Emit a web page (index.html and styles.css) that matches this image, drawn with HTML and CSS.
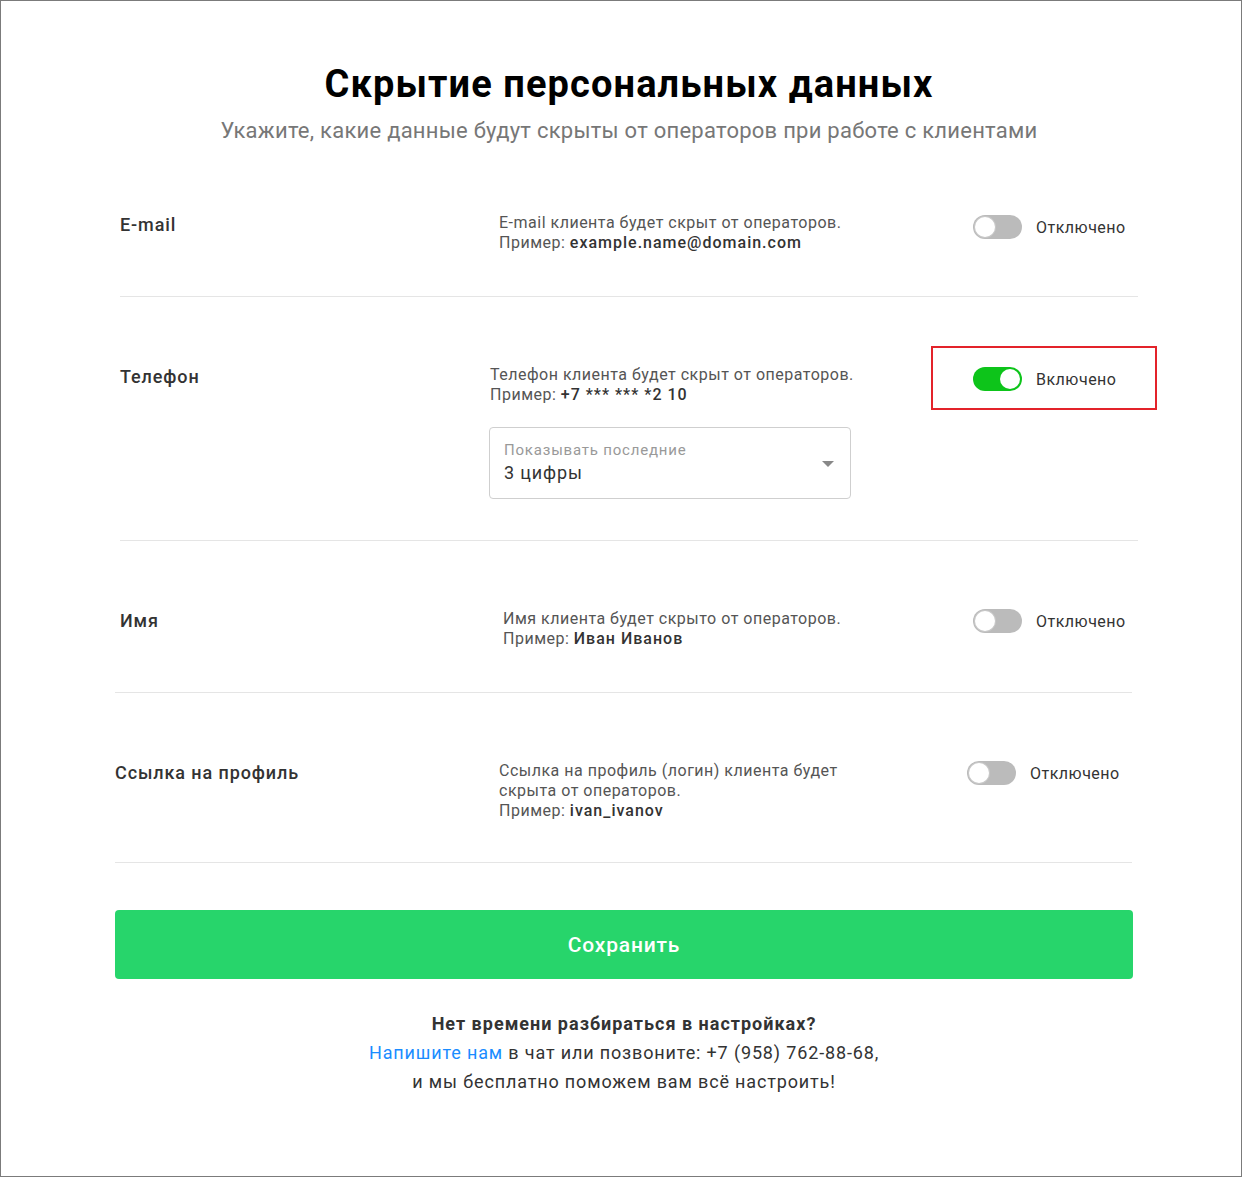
FILE: index.html
```html
<!DOCTYPE html>
<html lang="ru">
<head>
<meta charset="utf-8">
<title>Скрытие персональных данных</title>
<link rel="stylesheet" href="styles.css">
</head>
<body>
<div class="frame">
  <header class="head">
    <h1 class="title">Скрытие персональных данных</h1>
    <p class="subtitle">Укажите, какие данные будут скрыты от операторов при работе с клиентами</p>
  </header>

  <section class="rows">
    <div class="row row--a row--email">
      <div class="label">E-mail</div>
      <div class="desc">
        <p>E-mail клиента будет скрыт от операторов.<br>Пример: <b>example.name@domain.com</b></p>
      </div>
      <div class="switch">
        <span class="toggle"><span class="knob"></span></span>
        <span class="state">Отключено</span>
      </div>
    </div>

    <div class="row row--a row--phone">
      <div class="label">Телефон</div>
      <div class="desc">
        <p>Телефон клиента будет скрыт от операторов.<br>Пример: <b>+7 *** *** *2 10</b></p>
        <div class="select">
          <span class="select-label">Показывать последние</span>
          <span class="select-value">3 цифры</span>
          <span class="select-arrow"></span>
        </div>
      </div>
      <div class="switch">
        <span class="toggle toggle--on"><span class="knob"></span></span>
        <span class="state">Включено</span>
        <span class="mark"></span>
      </div>
    </div>

    <div class="row row--b row--name">
      <div class="label">Имя</div>
      <div class="desc">
        <p>Имя клиента будет скрыто от операторов.<br>Пример: <b>Иван Иванов</b></p>
      </div>
      <div class="switch">
        <span class="toggle"><span class="knob"></span></span>
        <span class="state">Отключено</span>
      </div>
    </div>

    <div class="row row--b row--link">
      <div class="label">Ссылка на профиль</div>
      <div class="desc">
        <p>Ссылка на профиль (логин) клиента будет<br>скрыта от операторов.<br>Пример: <b>ivan_ivanov</b></p>
      </div>
      <div class="switch">
        <span class="toggle"><span class="knob"></span></span>
        <span class="state">Отключено</span>
      </div>
    </div>
  </section>

  <div class="actions">
    <button class="save" type="button">Сохранить</button>
  </div>

  <footer class="help">
    <p class="help-title">Нет времени разбираться в настройках?</p>
    <p><a class="help-link" href="#">Напишите нам</a> в чат или позвоните: +7 (958) 762-88-68,</p>
    <p>и мы бесплатно поможем вам всё настроить!</p>
  </footer>
</div>
</body>
</html>
```

FILE: styles.css
```css
* { box-sizing: border-box; }
html, body { margin: 0; padding: 0; background: #fff; }
body {
  font-family: Roboto, "Noto Sans", "Liberation Sans", sans-serif;
  color: #333;
}
.frame {
  width: 1242px;
  height: 1177px;
  border: 1px solid #7b7b7b;
  padding-top: 60px;
  overflow: hidden;
}
.head { text-align: center; padding-left: 16px; }
.title {
  margin: 0;
  font-size: 38px;
  line-height: 46px;
  font-weight: 700;
  color: #000;
  letter-spacing: 1.1px;
}
.subtitle {
  margin: 9px 0 0;
  font-size: 22px;
  line-height: 30px;
  color: #777;
  letter-spacing: 0.25px;
}
.rows { display: flex; flex-direction: column; margin-top: -1px; }
.row {
  display: grid;
  grid-template-columns: 379px 474px auto;
  align-items: start;
  padding: 68px 0 43px;
  border-bottom: 1px solid #e5e5e5;
}
.row--a { margin-left: 119px; width: 1018px; }
.row--b { margin-left: 114px; width: 1017px; }
.row--phone { padding-bottom: 41px; }
.row--link { padding-bottom: 41px; }
.label {
  font-size: 18px;
  line-height: 22px;
  font-weight: 500;
  color: #333;
  margin-top: 1px;
  letter-spacing: 0.9px;
}
.row--name .label { padding-left: 5px; }
.desc p {
  margin: 0;
  font-size: 16px;
  line-height: 20px;
  color: #555;
  letter-spacing: 0.5px;
}
.desc b { font-weight: 500; color: #333; letter-spacing: 1px; }
.row--phone .desc { margin-left: -9px; }
.row--name .desc { margin-left: 9px; }
.row--link .desc { margin-left: 5px; }
.row--name .switch { margin-left: 5px; }
.row--link .switch { margin-left: -1px; }

.switch {
  position: relative;
  display: flex;
  align-items: center;
  gap: 14px;
  height: 26px;
  margin-top: 1px;
}
.row--name .switch, .row--link .switch { margin-top: -1px; }
.toggle {
  position: relative;
  width: 49px;
  height: 24px;
  border-radius: 12px;
  background: #bbb;
  flex: none;
}
.toggle .knob {
  position: absolute;
  top: 2px;
  left: 2px;
  width: 20px;
  height: 20px;
  border-radius: 50%;
  background: #fff;
  box-shadow: 0 0 0 1px #c8c8c8;
}
.toggle--on { background: #0dc41a; }
.toggle--on .knob { left: 27px; box-shadow: none; }
.state { font-size: 16px; color: #333; letter-spacing: 0.5px; }
.mark {
  position: absolute;
  left: -42px;
  top: -20px;
  width: 226px;
  height: 64px;
  border: 2px solid #e3232a;
}

.select {
  position: relative;
  margin: 22px 0 0 -1px;
  width: 362px;
  height: 72px;
  border: 1px solid #cfcfcf;
  border-radius: 4px;
  padding: 12px 14px 0;
  display: flex;
  flex-direction: column;
}
.select-label { font-size: 15px; line-height: 20px; color: #999; letter-spacing: 0.8px; }
.select-value { font-size: 18px; line-height: 26px; color: #333; letter-spacing: 0.85px; }
.select-arrow {
  position: absolute;
  right: 16px;
  top: 33px;
  width: 0;
  height: 0;
  border-left: 6px solid transparent;
  border-right: 6px solid transparent;
  border-top: 6px solid #888;
}

.actions { margin: 47px 0 0 114px; width: 1018px; }
.save {
  display: block;
  width: 100%;
  height: 69px;
  border: 0;
  border-radius: 4px;
  background: #27d56b;
  color: #fff;
  font-family: inherit;
  font-size: 21px;
  font-weight: 500;
  letter-spacing: 0.8px;
  cursor: pointer;
}
.help {
  text-align: center;
  margin-top: 30px;
  padding-left: 6px;
  font-size: 18px;
  line-height: 29px;
  color: #333;
  letter-spacing: 0.85px;
}
.help p { margin: 0; }
.help-title { font-weight: 700; letter-spacing: 1px; }
.help-link { color: #1a8cff; text-decoration: none; }
```
